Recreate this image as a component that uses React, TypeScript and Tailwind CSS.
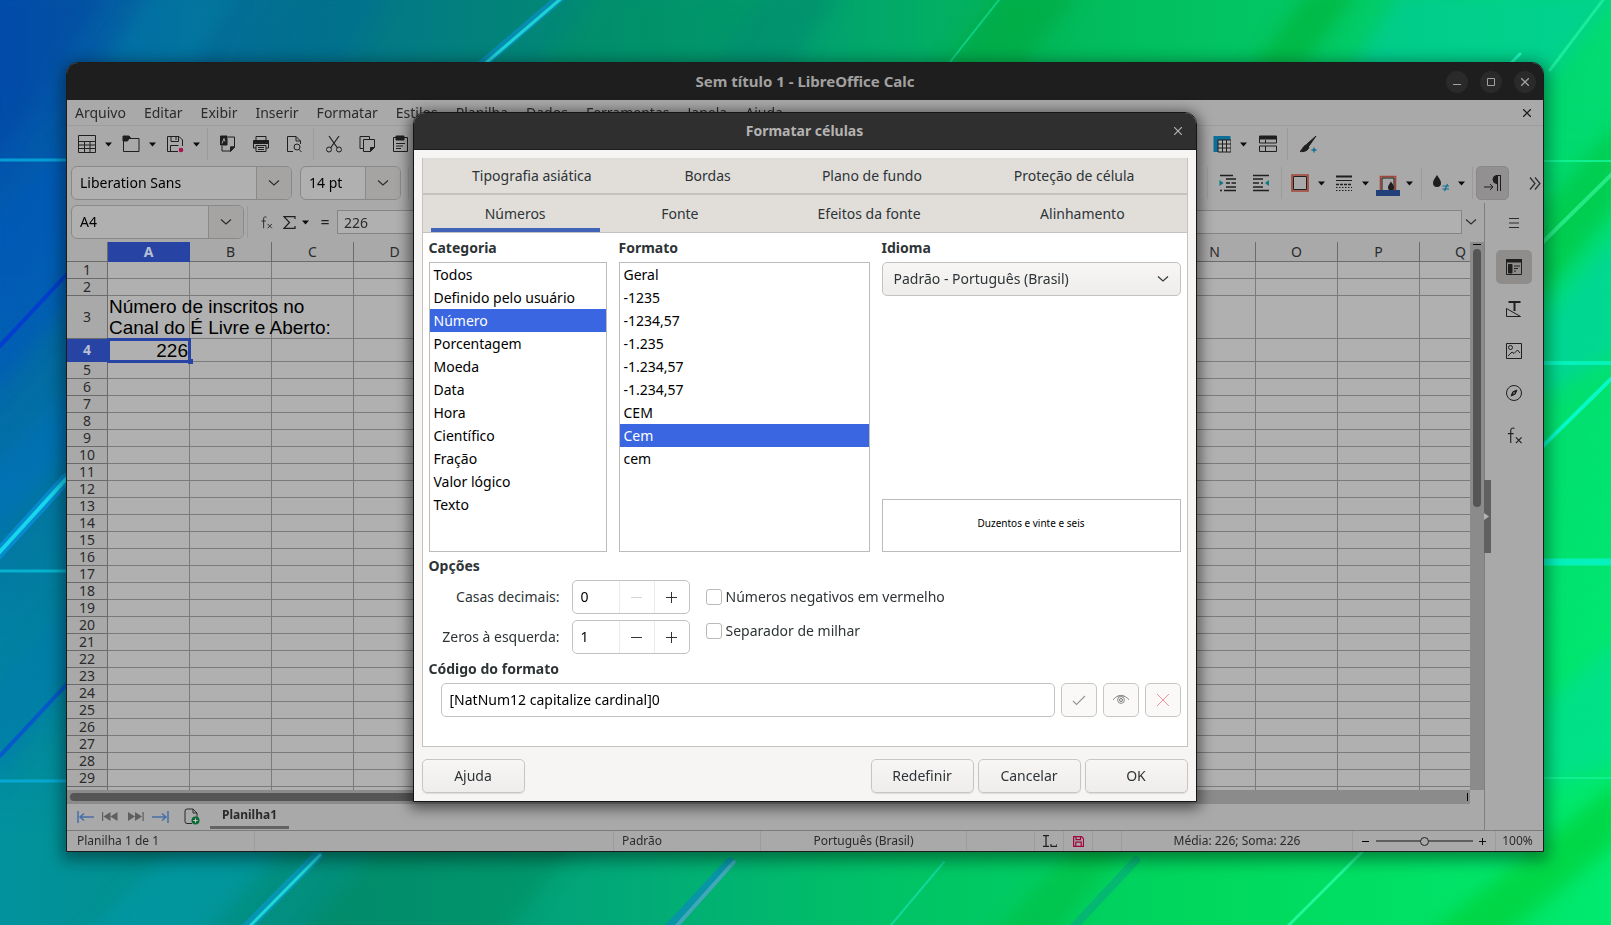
import React, { useState } from 'react'

const COLS = 'ABCDEFGHIJKLMNOPQ'.split('')
const ROWS = Array.from({ length: 29 }, (_, i) => i + 1)
const MENUS = ['Arquivo', 'Editar', 'Exibir', 'Inserir', 'Formatar', 'Estilos', 'Planilha', 'Dados', 'Ferramentas', 'Janela', 'Ajuda']
const CATEGORIES = ['Todos', 'Definido pelo usuário', 'Número', 'Porcentagem', 'Moeda', 'Data', 'Hora', 'Científico', 'Fração', 'Valor lógico', 'Texto']
const FORMATS = ['Geral', '-1235', '-1234,57', '-1.235', '-1.234,57', '-1.234,57', 'CEM', 'Cem', 'cem']

const TABS_TOP = [
  { label: 'Tipografia asiática', grow: 'flex-[203]' },
  { label: 'Bordas', grow: 'flex-[149]' },
  { label: 'Plano de fundo', grow: 'flex-[180]' },
  { label: 'Proteção de célula', grow: 'flex-[225]' },
]
const TABS_BOTTOM = [
  { label: 'Números', grow: 'flex-[169]' },
  { label: 'Fonte', grow: 'flex-[160]' },
  { label: 'Efeitos da fonte', grow: 'flex-[218]' },
  { label: 'Alinhamento', grow: 'flex-[208]' },
]

function Wallpaper() {
  return (
    <svg className="absolute inset-0 h-full w-full" viewBox="0 0 1611 925" preserveAspectRatio="none" aria-hidden="true">
      <defs>
        <linearGradient id="top" x1="0" x2="1" y1="0" y2="0">
          <stop offset="0" stopColor="#0450b0" />
          <stop offset="0.12" stopColor="#046a9a" />
          <stop offset="0.32" stopColor="#028478" />
          <stop offset="0.5" stopColor="#02a070" />
          <stop offset="0.64" stopColor="#02b85a" />
          <stop offset="0.85" stopColor="#02cc68" />
          <stop offset="1" stopColor="#02dc72" />
        </linearGradient>
        <linearGradient id="bottom" x1="0" x2="1" y1="0" y2="0">
          <stop offset="0" stopColor="#02929e" />
          <stop offset="0.2" stopColor="#028f7c" />
          <stop offset="0.38" stopColor="#02a878" />
          <stop offset="0.55" stopColor="#00c266" />
          <stop offset="0.75" stopColor="#00d85c" />
          <stop offset="1" stopColor="#00ea70" />
        </linearGradient>
        <linearGradient id="fade" x1="0" x2="0" y1="0" y2="1">
          <stop offset="0.1" stopColor="#000" />
          <stop offset="0.9" stopColor="#fff" />
        </linearGradient>
        <mask id="lower">
          <rect width="1611" height="925" fill="url(#fade)" />
        </mask>
        <filter id="soft">
          <feGaussianBlur stdDeviation="9" />
        </filter>
      </defs>
      <rect width="1611" height="925" fill="url(#top)" />
      <rect width="1611" height="925" fill="url(#bottom)" mask="url(#lower)" />
      <g filter="url(#soft)">
        <path d="M-10 -10H110L-10 170Z" fill="#0248a0" opacity=".5" />
        <path d="M150 -10h90L190 70h-90Z" fill="#0284a8" opacity=".4" />
        <path d="M300 -10h90L340 70h-90Z" fill="#046c90" opacity=".4" />
        <path d="M600 -10h170L710 70H540Z" fill="#00945c" opacity=".4" />
        <path d="M770 -10h70L790 70h-80Z" fill="#00886c" opacity=".5" />
        <path d="M1000 -10h80L1020 70h-80Z" fill="#00a83c" opacity=".6" />
        <path d="M1310 -10h50L1300 70h-50Z" fill="#00b030" opacity=".6" />
        <path d="M1400 -10h220L1540 90h-200Z" fill="#00ccaa" opacity=".5" />
        <path d="M1620 120v80L1540 300v-90Z" fill="#00c030" opacity=".5" />
        <path d="M1620 230v120L1540 400v-80Z" fill="#00d4a8" opacity=".6" />
        <path d="M1620 640v120L1540 790v-80Z" fill="#00dca0" opacity=".5" />
        <path d="M1620 780v60L1500 940h-80Z" fill="#00d038" opacity=".7" />
        <path d="M-10 220L80 130v160L-10 400Z" fill="#0258c0" opacity=".5" />
        <path d="M-10 470L80 380v60L-10 540Z" fill="#0270c0" opacity=".5" />
        <path d="M-10 690L80 590v80L-10 790Z" fill="#0278b0" opacity=".5" />
        <path d="M180 840h110L200 940H80Z" fill="#009cb0" opacity=".5" />
        <path d="M380 840h200L500 940H300Z" fill="#008456" opacity=".4" />
        <path d="M1080 840h50L1050 940h-60Z" fill="#00c040" opacity=".6" />
      </g>
      <g fill="none" strokeLinecap="round">
        <path d="M562 -4L478 68" stroke="#0890c8" strokeWidth="9" opacity=".7" />
        <path d="M564 -4L480 68" stroke="#20dcd8" strokeWidth="3" opacity=".9" />
        <path d="M1002 -4L950 62" stroke="#10d890" strokeWidth="2" opacity=".8" />
        <path d="M1606 -4L1550 70" stroke="#20f0a0" strokeWidth="3" opacity=".8" />
        <path d="M1520 54L1510 64" stroke="#20f8c0" strokeWidth="3" />
        <path d="M0 160H67M0 781H67" stroke="#08b0e0" strokeWidth="3" opacity=".8" />
        <path d="M0 346L67 274" stroke="#0430d8" strokeWidth="4" opacity=".7" />
        <path d="M0 756L67 684" stroke="#0848d8" strokeWidth="4" opacity=".7" />
        <path d="M-4 556L67 478" stroke="#0890d8" strokeWidth="11" opacity=".8" />
        <path d="M-4 556L67 478" stroke="#18e0f0" strokeWidth="4" opacity=".9" />
        <path d="M0 571H67" stroke="#08c0d8" strokeWidth="3" opacity=".8" />
        <path d="M318 855L246 928" stroke="#0898c8" strokeWidth="10" opacity=".7" />
        <path d="M320 855L248 928" stroke="#20e0d8" strokeWidth="3" opacity=".9" />
        <path d="M730 862L650 948" stroke="#0890b0" strokeWidth="9" opacity=".85" />
        <path d="M734 862L657 948" stroke="#40a8b8" strokeWidth="4" />
        <path d="M944 862L870 950" stroke="#10d898" strokeWidth="2" />
        <path d="M1136 860L1054 948" stroke="#08a880" strokeWidth="8" opacity=".6" />
        <path d="M1362 852L1286 928" stroke="#20f898" strokeWidth="3" />
        <path d="M1543 161H1611M1543 778H1611" stroke="#10f090" strokeWidth="2" />
        <path d="M1543 363H1611" stroke="#08f4c0" strokeWidth="4" opacity=".9" />
        <path d="M1543 562H1611" stroke="#08f4d0" strokeWidth="7" opacity=".8" />
        <path d="M1543 242L1614 172" stroke="#30f090" strokeWidth="4" opacity=".8" />
        <path d="M1543 446L1614 376" stroke="#08fcd0" strokeWidth="4" opacity=".9" />
      </g>
    </svg>
  )
}

function Svg({ children, size = 18 }: { children: React.ReactNode; size?: number }) {
  return (
    <svg width={size} height={size} viewBox="0 0 18 18" fill="none" stroke="#1f1f1f" strokeWidth="1">
      {children}
    </svg>
  )
}

function Tool({ label, children, wide = false }: { label: string; children: React.ReactNode; wide?: boolean }) {
  return (
    <button aria-label={label} className={wide ? 'flex h-[34px] w-[33px] items-center justify-center' : 'flex h-[34px] w-[29px] items-center justify-center'}>
      <Svg>{children}</Svg>
    </button>
  )
}

function Arrow({ label }: { label: string }) {
  return (
    <button aria-label={label} className="flex h-[34px] w-[15px] items-center justify-center">
      <svg width="7" height="5" viewBox="0 0 7 5"><path d="M0 .5H7L3.5 4.5Z" fill="#0c0c0c" /></svg>
    </button>
  )
}

function Sep() {
  return <div className="mx-[3px] h-8 w-px bg-[#9b9b9b]" />
}

function Chevron() {
  return (
    <svg width="12" height="8" viewBox="0 0 12 8" fill="none" stroke="currentColor" strokeWidth="1.1"><path d="M1 1.5L6 6L11 1.5" /></svg>
  )
}

function Combo({ label, value, width }: { label: string; value: string; width: string }) {
  return (
    <div className={`${width} flex h-[34px] shrink-0 overflow-hidden rounded-md border border-[#8b8987] bg-[#b0b0b0]`}>
      <input aria-label={label} defaultValue={value} className="min-w-0 flex-1 bg-transparent pl-2 text-black outline-none" />
      <button aria-label={`Abrir ${label}`} className="flex w-[35px] items-center justify-center border-l border-[#8b8987] bg-[#a5a4a2] text-[#2a2a2a]"><Chevron /></button>
    </div>
  )
}

function Toolbars() {
  return (
    <>
      <div className="flex h-[38px] items-center border-t border-[#9d9d9d] pb-px pl-[5px]">
        <Tool label="Novo"><path d="M.5 .5h17v17H.5zM.5 6.5h17M.5 10h17M.5 13.5h17M6.5 6.5v11M12 6.5v11" /></Tool>
        <Arrow label="Opções de novo" />
        <Tool label="Abrir"><path d="M1.5 3.5h15.5v13H1.5z" /><path d="M1 1h6l2 2.500h-2L5.500 6H1z" fill="#1f1f1f" /></Tool>
        <Arrow label="Opções de abrir" />
        <Tool label="Salvar"><path d="M12 16.500H1.500v-15H13l3.500 3.500v6M5 1.500v5h7.500v-5M10 2v3M4.500 16.500v-6h8" /><circle cx="15" cy="15" r="2.300" fill="#a8154e" stroke="none" /></Tool>
        <Arrow label="Opções de salvar" />
        <Sep />
        <Tool wide label="Exportar como PDF"><path d="M9 2h6.500v10l-4 4H3v-5M11.500 16v-4h4" /><path d="M1.500 1H8v9H1.500z" fill="#1f1f1f" /><path d="M3 8.500l2-5 1 3" stroke="#a9a9a9" /><path d="M11.500 16.500v-4.500h4z" fill="#1f1f1f" /></Tool>
        <Tool wide label="Imprimir"><path d="M4 5V1.500h10V5M4 13H1.500V5.500h15V13H14M4 10.500h10v6H4zM6 12.500h6M6 14.500h6" /><path d="M1.500 6h15v2.500h-15z" fill="#1f1f1f" /></Tool>
        <Tool wide label="Visualizar impressão"><path d="M8 16.500H2.500v-15H11l4.500 4.500v3M11 1.500V6h4.500" /><circle cx="12" cy="12" r="3" /><path d="M14 14.500l2.500 2.500" /></Tool>
        <Sep />
        <Tool wide label="Cortar"><path d="M4 1l8.500 12M14 1L5.500 13" strokeWidth="1.200" /><circle cx="4" cy="14.500" r="2.500" /><circle cx="14" cy="14.500" r="2.500" /></Tool>
        <Tool wide label="Copiar"><path d="M5 13.500H2v-12h9.500V4M5.500 4.500h11v8l-4 4h-7z" /><path d="M12.500 16.500v-4h4z" fill="#1f1f1f" /></Tool>
        <Tool wide label="Colar"><path d="M2.500 2.500h14v14h-14zM5 8.500h9M5 11h7M5 13.500h5" /><path d="M5 1h8v4H5z" fill="#1f1f1f" /></Tool>
        <div className="flex-1" />
        <Tool label="Congelar linhas e colunas"><path d="M.5 1h17v16H.5z" fill="#0d6f97" stroke="none" /><path d="M5 5h13v12H5z" fill="#b0b0b0" /><path d="M9.500 5v12M13.500 5v12M5 9h13M5 13h13" /></Tool>
        <Arrow label="Opções de congelar" />
        <Tool wide label="Dividir janela"><path d="M.5 1h17v3H.5z" fill="#1f1f1f" /><path d="M.5 3v5h17V3M.5 11h17v5.500H.5zM6.500 5v3M6.500 11v5.500" /></Tool>
        <Sep />
        <Tool wide label="Mostrar funções de desenho"><path d="M17 1L8 9l2 2z M7.500 9.500l2.500 2.500c-1 4-5 5-9 4.500 2-1 2.500-5 6.500-7z" fill="#1f1f1f" /><path d="M15 12.500v5M12.500 15h5" stroke="#0d6f97" strokeWidth="1.400" /></Tool>
        <div className="w-[219px] shrink-0" />
      </div>
      <div className="flex h-10 items-center pl-1">
        <Combo label="Nome da fonte" value="Liberation Sans" width="w-[221px]" />
        <div className="w-2 shrink-0" />
        <Combo label="Tamanho da fonte" value="14 pt" width="w-[101px]" />
        <div className="w-1 shrink-0" />
        <Sep />
        <div className="flex-1" />
        <Sep />
        <Tool wide label="Aumentar recuo"><path d="M1 1.500h13M7 5h10M7 9h4M12.500 9h4.500M7 13h10M1 16.500h2M5 16.500h12" strokeWidth="1.300" /><path d="M.5 6v6l4-3z" fill="#0b7a80" stroke="none" /></Tool>
        <Tool wide label="Diminuir recuo"><path d="M1 1.500h16M1 5h10M1 9h6M9 9h2M1 13h10M1 16.500h16" strokeWidth="1.300" /><path d="M17 6v6l-4-3z" fill="#0b7a80" stroke="none" /></Tool>
        <div className="w-px" />
        <Sep />
        <Tool label="Bordas"><path d="M1 1h16v16H1z" stroke="#a34435" strokeWidth="1.600" /><path d="M2.500 2.500h13v13h-13z" /></Tool>
        <Arrow label="Opções de bordas" />
        <Tool label="Estilo da borda"><path d="M1 2.500h16" strokeWidth="2" /><path d="M1 6.500h16" /><path d="M1 10.500h16" strokeWidth="1.500" strokeDasharray="3 1" /><path d="M1 16.500h16M1 13.500h16" strokeDasharray="1.500 1.500" /></Tool>
        <Arrow label="Opções de estilo da borda" />
        <button aria-label="Cor da borda" className="flex h-[34px] w-[29px] flex-col items-center justify-center pt-1">
          <svg width="24" height="21" viewBox="0 0 24 21" fill="none"><path d="M4.500 15V1.500h15V15" stroke="#a34435" strokeWidth="1.600" /><path d="M6 15V3h12v12" stroke="#1f1f1f" /><path d="M15 6.500c2 3 3 4.500 3 6a3 3 0 0 1-6 0c0-1.500 1-3 3-6z" fill="#1f1f1f" /><path d="M0 15h24v6H0z" fill="#213f78" /></svg>
        </button>
        <Arrow label="Opções de cor da borda" />
        <div className="w-px" />
        <Sep />
        <Tool label="Condicional"><path d="M6 1c2.500 3.500 4 5.500 4 8a4 4 0 0 1-8 0c0-2.500 1.500-4.500 4-8z" fill="#1f1f1f" stroke="none" /><path d="M11.500 12h6.500M11.500 15h6.500M16.500 10l-3 7" stroke="#0d6f97" strokeWidth="1.200" /></Tool>
        <Arrow label="Opções de condicional" />
        <Sep />
        <button aria-label="Da esquerda para a direita" aria-pressed="true" className="flex h-[34px] w-[33px] items-center justify-center rounded-[5px] border border-[#8a8886] bg-[#929090]">
          <Svg><path d="M0 13h9M6 10l3 3-3 3M13.500 1v16M16.500 1v16M12 1.500h5" /><path d="M13 1.500a4 4 0 0 0 0 8z" fill="#1f1f1f" /></Svg>
        </button>
        <button aria-label="Mais controles" className="flex h-[34px] w-[34px] items-center justify-end pr-[2px]">
          <svg width="12" height="13" viewBox="0 0 12 13" fill="none" stroke="#2a2a2a" strokeWidth="1.2"><path d="M1 .5l5 6-5 6M6 .5l5 6-5 6" /></svg>
        </button>
      </div>
    </>
  )
}

function FxIcon({ size = 18 }: { size?: number }) {
  return (
    <svg width={size} height={size} viewBox="0 0 18 18" fill="none" stroke="#1f1f1f" strokeWidth="1.2"><path d="M9 1.500C6.500 .5 5 1.500 5 4v13M2 7h6M10.500 11l6 6M16.500 11l-6 6" /></svg>
  )
}

function FormulaBar() {
  return (
    <div className="flex h-[39px] items-center pb-px pl-1">
      <Combo label="Caixa de nome" value="A4" width="w-[173px]" />
      <Sep />
      <button aria-label="Assistente de funções" className="ml-[3px] flex w-6 justify-center"><FxIcon size={13} /></button>
      <button aria-label="Selecionar função" className="ml-[2px] flex w-[18px] justify-center">
        <svg width="13" height="13" viewBox="0 0 13 13" fill="none" stroke="#1f1f1f" strokeWidth="1.2"><path d="M12 3V.7H1l5.500 5.800L1 12.300h11V10" /></svg>
      </button>
      <Arrow label="Opções de soma" />
      <button aria-label="Fórmula" className="w-6 text-base text-[#1f1f1f]">=</button>
      <input aria-label="Linha de entrada" defaultValue="226" className="h-6 min-w-0 flex-1 border border-[#858585] bg-[#b0b0b0] pl-[6px] text-[#2b2b2b] outline-none" />
      <button aria-label="Expandir barra de fórmulas" className="flex w-[22px] pl-[3px]"><Chevron /></button>
    </div>
  )
}

function Sheet() {
  return (
    <div className="flex h-[548px]">
      <div className="min-w-0 flex-1 overflow-hidden">
        <table className="w-[1435px] table-fixed border-separate border-spacing-0 bg-[#b0b0b0]">
          <thead>
            <tr className="h-5 bg-[#a9a9a9] leading-[19px]">
              <th className="w-[41px] border-r border-b border-[#6b6b6b] p-0" />
              {COLS.map(c => (
                <th key={c} scope="col" className={c === 'A'
                  ? 'w-[82px] border-r border-b border-[#2744a4] bg-[#2744a4] p-0 font-bold text-[#b8bfd4]'
                  : 'w-[82px] border-r border-b border-[#6b6b6b] p-0 font-normal'}>{c}</th>
              ))}
            </tr>
          </thead>
          <tbody>
            {ROWS.map(r => (
              <tr key={r} className={r === 3 ? 'h-[43px]' : r === 4 ? 'h-[23px]' : 'h-[17px]'}>
                <th scope="row" className={r === 4
                  ? 'border-r border-b border-[#2744a4] bg-[#2744a4] p-0 leading-4 font-bold text-[#b8bfd4]'
                  : 'border-r border-b border-[#6b6b6b] bg-[#a9a9a9] p-0 leading-4 font-normal'}>{r}</th>
                {COLS.map(c => {
                  if (c === 'A' && r === 3) {
                    return <td key={c} className="border-r border-b border-[#7b7b7b] p-0 pl-px align-top font-['Liberation_Sans',sans-serif] text-[19px] leading-[21px] whitespace-pre text-black">{'Número de inscritos no\nCanal do É Livre e Aberto:'}</td>
                  }
                  if (c === 'A' && r === 4) {
                    return (
                      <td key={c} className="relative p-0 pr-[2px] text-right font-['Liberation_Sans',sans-serif] text-[19px] leading-[21px] text-black outline-3 -outline-offset-2 outline-[#2744a4]">
                        226
                        <span className="absolute -right-[3px] -bottom-[2px] size-[5px] bg-[#2744a4]" />
                      </td>
                    )
                  }
                  return <td key={c} className="border-r border-b border-[#7b7b7b] p-0" />
                })}
              </tr>
            ))}
            <tr className="h-1">
              <th className="border-r border-[#6b6b6b] bg-[#a9a9a9] p-0" />
              {COLS.map(c => <td key={c} className="border-r border-[#7b7b7b] p-0" />)}
            </tr>
          </tbody>
        </table>
      </div>
      <div className="flex w-[14px] flex-col items-center bg-[#8b8b8b] pt-[2px]">
        <div className="h-px w-2 bg-black" />
        <div className="mt-1 h-[258px] w-2 rounded-full bg-[#555]" />
      </div>
    </div>
  )
}

function SheetTabs() {
  return (
    <>
      <div className="mr-[14px] flex h-[14px] items-center justify-between bg-[#8b8b8b] pr-[2px] pl-[3px]">
        <div className="h-2 w-2/3 rounded-full bg-[#555]" />
        <div className="h-2 w-px bg-black" />
      </div>
      <div className="flex h-[26px] items-center pb-px pl-[10px]">
        <button aria-label="Primeira planilha" className="w-[25px]">
          <svg width="17" height="12" viewBox="0 0 17 12" fill="none" stroke="#486fa8" strokeWidth="1.5"><path d="M1 0v12M3 6h14M7 2.500L3 6l4 3.500" /></svg>
        </button>
        <button aria-label="Planilha anterior" className="w-[26px]">
          <svg width="16" height="9" viewBox="0 0 16 9" fill="#5f5f5f"><path d="M0 0h1.200v9H0zM8.500 0v9L1.500 4.500zM15.500 0v9l-7-4.500z" /></svg>
        </button>
        <button aria-label="Próxima planilha" className="w-[24px]">
          <svg width="16" height="9" viewBox="0 0 16 9" fill="#5f5f5f"><path d="M0 0v9l7-4.500zM7 0v9l7-4.500zM14.500 0h1.200v9h-1.200z" /></svg>
        </button>
        <button aria-label="Última planilha" className="w-8">
          <svg width="17" height="12" viewBox="0 0 17 12" fill="none" stroke="#486fa8" strokeWidth="1.5"><path d="M16 0v12M0 6h14M10 2.500L14 6l-4 3.500" /></svg>
        </button>
        <button aria-label="Adicionar planilha" className="w-[26px]">
          <svg width="16" height="17" viewBox="0 0 16 17" fill="none"><path d="M8 15.500H3a2 2 0 0 1-2-2V3a2 2 0 0 1 2-2h6l4 4v4M9 1v4h4" stroke="#2b2b2b" /><circle cx="11.500" cy="12.500" r="4" fill="#0b6b32" /><path d="M11.500 10.300v4.400M9.300 12.500h4.400" stroke="#c8c8c8" /></svg>
        </button>
        <button aria-current="true" className="h-full w-[79px] border-b-[3px] border-[#636363] text-xs font-bold">Planilha1</button>
      </div>
    </>
  )
}

function Sidebar() {
  return (
    <aside className="relative flex w-[59px] flex-col items-center gap-2 border-l border-[#7f7f7f] pt-[5px]">
      <button aria-label="Configurações da barra lateral" className="mb-1 flex h-[30px] w-9 items-center justify-center">
        <svg width="10" height="10" viewBox="0 0 10 10" stroke="#2b2b2b"><path d="M0 .5h10M0 5h10M0 9.500h10" /></svg>
      </button>
      <button aria-label="Propriedades" className="flex h-[34px] w-9 items-center justify-center rounded-[5px] bg-[#8f8d8b]">
        <Svg><path d="M1.500 1.500h15v15h-15z" /><path d="M1.500 1.500h15v2.500h-15zM3.500 6.500h3.500v8.500h-3.500z" fill="#1f1f1f" /><path d="M9 8h6M9 10.500h4M9 13h2" /></Svg>
      </button>
      <button aria-label="Estilos" className="flex h-[34px] w-9 items-center justify-center">
        <Svg><path d="M3.500 2h12M9.500 2v9" strokeWidth="2" /><path d="M1.500 8.500v8h14z" /></Svg>
      </button>
      <button aria-label="Galeria" className="flex h-[34px] w-9 items-center justify-center">
        <Svg><path d="M1.500 1.500h15v15h-15z" /><circle cx="5.500" cy="5.500" r="2" /><path d="M3 14l4-4 2 1.500 3.500-3.500 2.500 3" /></Svg>
      </button>
      <button aria-label="Navegador" className="flex h-[34px] w-9 items-center justify-center">
        <Svg><circle cx="9" cy="9" r="7.500" /><path d="M12 6l-1.800 4.200L6 12l1.800-4.200z" fill="#1f1f1f" /><circle cx="9" cy="9" r=".8" fill="#a9a9a9" stroke="none" /></Svg>
      </button>
      <button aria-label="Funções" className="flex h-[34px] w-9 items-center justify-center"><FxIcon size={17} /></button>
      <button aria-label="Ocultar barra lateral" className="absolute top-[277px] -left-px flex h-[73px] w-[7px] items-center bg-[#606060]">
        <svg width="5" height="7" viewBox="0 0 5 7"><path d="M0 0l5 3.500L0 7z" fill="#b4b4b4" /></svg>
      </button>
    </aside>
  )
}

function StatusBar() {
  return (
    <footer className="flex h-[21px] items-center border-t border-[#7b7b7b] text-xs leading-5 [&>div]:h-full [&>div]:border-r [&>div]:border-[#9c9c9c]">
      <div className="w-[188px] pl-[10px]">Planilha 1 de 1</div>
      <div className="flex-1" />
      <div className="w-[147px] pl-2">Padrão</div>
      <div className="w-[206px] text-center">Português (Brasil)</div>
      <div className="w-[68px]" />
      <div className="flex w-[29px] items-center justify-center">
        <svg width="15" height="12" viewBox="0 0 15 12" fill="none" stroke="#1f1f1f" strokeWidth="1.2"><path d="M1 .7h6M4 .7v10.600M1 11.300h6M9 9v2.300h6V9" /></svg>
      </div>
      <div className="flex w-[29px] items-center justify-center">
        <svg width="11" height="11" viewBox="0 0 11 11" fill="none" stroke="#a3053f" strokeWidth="1.2"><path d="M.6 .6H8.500l2 2v7.800H.6zM3 .6v3h4.500v-3M2.800 10.400V6.200h5.400v4.200" /></svg>
      </div>
      <div className="w-[29px]" />
      <div className="w-[231px] text-center">Média: 226; Soma: 226</div>
      <div className="flex w-[143px] items-center justify-center gap-[6px]">
        <button aria-label="Reduzir" className="flex w-2 justify-center"><span className="h-px w-[7px] bg-black" /></button>
        <input
          type="range"
          aria-label="Zoom"
          defaultValue="50"
          className="h-3 w-[97px] appearance-none bg-[linear-gradient(#5e605e,#5e605e)] bg-[length:100%_2px] bg-center bg-no-repeat [&::-webkit-slider-thumb]:size-[9px] [&::-webkit-slider-thumb]:appearance-none [&::-webkit-slider-thumb]:rounded-full [&::-webkit-slider-thumb]:border [&::-webkit-slider-thumb]:border-[#222] [&::-webkit-slider-thumb]:bg-[#a9a9a9]"
        />
        <button aria-label="Ampliar" className="flex w-2 justify-center">
          <svg width="7" height="7" viewBox="0 0 7 7" stroke="#111"><path d="M0 3.500h7M3.500 0v7" /></svg>
        </button>
      </div>
      <span className="w-[47px] pr-1 text-center">100%</span>
    </footer>
  )
}

function List({ label, items, selected, onSelect, width }: { label: string; items: string[]; selected: number; onSelect: (i: number) => void; width: string }) {
  return (
    <div className={width}>
      <div id={`list-${label}`} className="pb-1 leading-5 font-bold">{label}</div>
      <ul role="listbox" aria-labelledby={`list-${label}`} className="h-[290px] border border-[#bdbab7] bg-white text-black">
        {items.map((item, i) => (
          <li
            key={i}
            role="option"
            aria-selected={i === selected}
            onClick={() => onSelect(i)}
            className={i === selected ? 'h-[23px] bg-[#3a66e2] pl-1 leading-[23px] text-white' : 'h-[23px] pl-1 leading-[23px]'}
          >
            {item}
          </li>
        ))}
      </ul>
    </div>
  )
}

function Spin({ id, label, initial }: { id: string; label: string; initial: number }) {
  const [value, setValue] = useState(initial)
  return (
    <div className="flex items-center gap-3">
      <label htmlFor={id} className="w-[131px] text-right">{label}</label>
      <div className="flex h-[34px] w-[118px] overflow-hidden rounded-[5px] border border-[#c4c1be] bg-white">
        <input id={id} value={value} onChange={e => setValue(Number(e.target.value) || 0)} className="min-w-0 flex-1 pl-2 text-black outline-none" />
        <button
          aria-label={`Diminuir ${label}`}
          disabled={value === 0}
          onClick={() => setValue(value - 1)}
          className="flex w-[35px] items-center justify-center border-l border-[#ecebea] text-[#2e3436] disabled:text-[#d6d4d2]"
        >
          <svg width="11" height="11" viewBox="0 0 11 11" stroke="currentColor"><path d="M0 5.500h11" /></svg>
        </button>
        <button aria-label={`Aumentar ${label}`} onClick={() => setValue(value + 1)} className="flex w-[35px] items-center justify-center border-l border-[#ecebea] text-[#2e3436]">
          <svg width="11" height="11" viewBox="0 0 11 11" stroke="currentColor"><path d="M0 5.500h11M5.500 0v11" /></svg>
        </button>
      </div>
    </div>
  )
}

function Check({ label }: { label: string }) {
  return (
    <label className="flex h-[34px] items-center gap-1">
      <input type="checkbox" className="size-4 appearance-none rounded-[3px] border border-[#bcb8b4] bg-white checked:bg-[#3a66e2]" />
      {label}
    </label>
  )
}

function DialogButton({ children }: { children: React.ReactNode }) {
  return (
    <button className="h-[34px] w-[103px] rounded-[5px] border border-[#c9c6c2] bg-linear-to-b from-[#f7f6f5] to-[#efedec] shadow-[0_1px_1px_#0000001a]">{children}</button>
  )
}

function IconButton({ label, children }: { label: string; children: React.ReactNode }) {
  return (
    <button aria-label={label} className="flex h-[34px] w-9 items-center justify-center rounded-[5px] border border-[#c9c6c2] bg-[#faf9f8]">
      <svg width="16" height="14" viewBox="0 0 16 14" fill="none">{children}</svg>
    </button>
  )
}

function FormatDialog() {
  const [category, setCategory] = useState(2)
  const [format, setFormat] = useState(7)
  const [code, setCode] = useState('[NatNum12 capitalize cardinal]0')

  return (
    <div role="dialog" aria-label="Formatar células" className="absolute top-[112px] left-[calc(50%-393px)] w-[784px] overflow-hidden rounded-t-xl border border-[#151515] bg-[#f6f5f4] text-[#2e3436] shadow-[0_3px_14px_3px_#0000008c]">
      <header className="relative flex h-[37px] items-center justify-center border-b border-[#1c1c1c] bg-[#2f2f2f] text-sm font-bold text-[#b4b3b2]">
        Formatar células
        <button aria-label="Fechar diálogo" className="absolute right-[14px]">
          <svg width="8" height="8" viewBox="0 0 8 8" fill="none" stroke="#b4b3b2" strokeWidth="1.2"><path d="M0 0l8 8M8 0L0 8" /></svg>
        </button>
      </header>
      <div className="p-2">
        <div className="border border-t-0 border-[#c5c2bf] bg-white">
          <div role="tablist" className="bg-[#e1deda]">
            <div className="flex h-[37px] border-b-2 border-[#c5c2bf] pl-2">
              {TABS_TOP.map(t => <button key={t.label} role="tab" className={t.grow}>{t.label}</button>)}
            </div>
            <div className="flex h-[38px] border-b border-[#c5c2bf] pl-2">
              {TABS_BOTTOM.map((t, i) => (
                <button
                  key={t.label}
                  role="tab"
                  aria-selected={i === 0}
                  className={i === 0 ? `${t.grow} border-b-4 border-[#4163b8] pt-1` : t.grow}
                >
                  {t.label}
                </button>
              ))}
            </div>
          </div>
          <div className="px-[6px] pt-[5px] pb-[29px]">
            <div className="flex gap-3">
              <List label="Categoria" items={CATEGORIES} selected={category} onSelect={setCategory} width="w-[178px]" />
              <List label="Formato" items={FORMATS} selected={format} onSelect={setFormat} width="w-[251px]" />
              <div className="flex flex-1 flex-col">
                <label htmlFor="idioma" className="pb-1 leading-5 font-bold">Idioma</label>
                <div className="relative">
                  <select id="idioma" className="h-[34px] w-full appearance-none rounded-[5px] border border-[#c4c1be] bg-linear-to-b from-[#f7f6f5] to-[#efedec] pl-[11px]">
                    <option>Padrão - Português (Brasil)</option>
                    <option>Inglês (EUA)</option>
                  </select>
                  <span className="pointer-events-none absolute top-[13px] right-3"><Chevron /></span>
                </div>
                <div className="flex-1" />
                <div className="flex h-[53px] items-center justify-center border border-[#bdbab7] pb-1 text-[10px] text-black">Duzentos e vinte e seis</div>
              </div>
            </div>
            <div className="pt-1 leading-5 font-bold">Opções</div>
            <div className="flex gap-4 pt-1">
              <div className="flex flex-col gap-[6px]">
                <Spin id="decimais" label="Casas decimais:" initial={0} />
                <Spin id="zeros" label="Zeros à esquerda:" initial={1} />
              </div>
              <div>
                <Check label="Números negativos em vermelho" />
                <Check label="Separador de milhar" />
              </div>
            </div>
            <label htmlFor="codigo" className="block pt-[5px] leading-5 font-bold">Código do formato</label>
            <div className="flex gap-[6px] pt-1 pl-3">
              <input
                id="codigo"
                value={code}
                onChange={e => setCode(e.target.value)}
                className="h-[34px] min-w-0 flex-1 rounded-[5px] border border-[#c4c1be] bg-white pb-px pl-2 text-black outline-none"
              />
              <IconButton label="Adicionar"><path d="M2 8l3.500 3.500L14 3" stroke="#929595" strokeWidth="1.1" /></IconButton>
              <IconButton label="Editar comentário">
                <path d="M0 7C3 1.500 13 1.500 16 7M4 3.500C6 2 10 2 12 3.500" stroke="#8a8d8d" />
                <circle cx="8" cy="7" r="3.400" stroke="#8a8d8d" />
                <circle cx="8" cy="7" r="1.500" stroke="#777" />
              </IconButton>
              <IconButton label="Remover"><path d="M2 1l12 12M14 1L2 13" stroke="#f0929c" /></IconButton>
            </div>
          </div>
        </div>
        <div className="flex gap-1 pt-3">
          <DialogButton>Ajuda</DialogButton>
          <div className="flex-1" />
          <DialogButton>Redefinir</DialogButton>
          <DialogButton>Cancelar</DialogButton>
          <DialogButton>OK</DialogButton>
        </div>
      </div>
    </div>
  )
}

export default function App() {
  return (
    <div className="relative min-h-screen overflow-hidden bg-[#02a070] pt-[62px] pr-[67px] pl-[66px] font-['Noto_Sans',sans-serif] text-sm text-[#2b2b2b]">
      <Wallpaper />
      <main className="relative overflow-hidden rounded-t-xl border border-[#1c1c1c] bg-[#a9a9a9] shadow-[0_4px_16px_4px_#00000066]">
        <header className="relative flex h-[37px] items-center justify-center bg-[#1e1e1e] text-[15px] font-bold text-[#a2a1a0]">
          Sem título 1 - LibreOffice Calc
          <div className="absolute right-[7px] flex gap-3">
            <button aria-label="Minimizar" className="flex size-[22px] items-center justify-center rounded-full bg-[#2a2a2a]">
              <svg width="8" height="8" viewBox="0 0 8 8" stroke="#a2a1a0"><path d="M0 6.500h8" /></svg>
            </button>
            <button aria-label="Maximizar" className="flex size-[22px] items-center justify-center rounded-full bg-[#2a2a2a]">
              <svg width="8" height="8" viewBox="0 0 8 8" fill="none" stroke="#a2a1a0"><path d="M.5 .5h7v7h-7z" /></svg>
            </button>
            <button aria-label="Fechar" className="flex size-[22px] items-center justify-center rounded-full bg-[#2a2a2a]">
              <svg width="8" height="8" viewBox="0 0 8 8" fill="none" stroke="#a2a1a0" strokeWidth="1.3"><path d="M0 0l8 8M8 0L0 8" /></svg>
            </button>
          </div>
        </header>
        <nav className="flex h-[25px] items-center gap-[18px] pr-3 pl-2">
          {MENUS.map(m => <button key={m}>{m}</button>)}
          <div className="flex-1" />
          <button aria-label="Fechar documento">
            <svg width="8" height="8" viewBox="0 0 8 8" fill="none" stroke="#1f1f1f" strokeWidth="1.3"><path d="M0 0l8 8M8 0L0 8" /></svg>
          </button>
        </nav>
        <Toolbars />
        <div className="flex">
          <div className="min-w-0 flex-1">
            <FormulaBar />
            <Sheet />
            <SheetTabs />
          </div>
          <Sidebar />
        </div>
        <StatusBar />
      </main>
      <FormatDialog />
    </div>
  )
}
